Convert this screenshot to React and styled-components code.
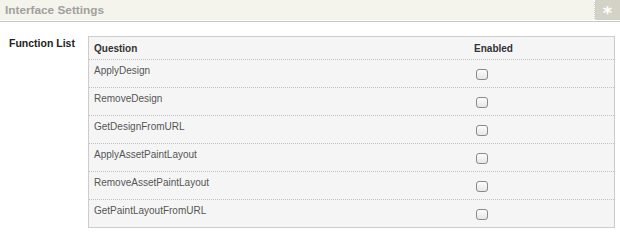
import React from 'react';
import styled, {createGlobalStyle} from "styled-components"

const Global = createGlobalStyle`
body {
  margin: 0;
  background: #fff;
  font-family: "Liberation Sans", Arial, sans-serif;
}
`;

const functions = [
  "ApplyDesign",
  "RemoveDesign",
  "GetDesignFromURL",
  "ApplyAssetPaintLayout",
  "RemoveAssetPaintLayout",
  "GetPaintLayoutFromURL",
];

const App = () => {
  return (
    <Page>
      <Global />
      <TitleBar>
        <Title>Interface Settings</Title>
        <StarBox>*</StarBox>
      </TitleBar>
      <Content>
        <Label>Function List</Label>
        <Table>
          <HeadRow>
            <QuestionCell header>Question</QuestionCell>
            <EnabledCell header>Enabled</EnabledCell>
          </HeadRow>
          {functions.map((name, i) => (
            <Row key={name} last={i === functions.length - 1}>
              <QuestionCell>{name}</QuestionCell>
              <EnabledCell>
                <Check type="checkbox" />
              </EnabledCell>
            </Row>
          ))}
        </Table>
      </Content>
    </Page>
  )
}

const Page = styled.div`
width: 620px;
`;

const TitleBar = styled.div`
display: flex;
align-items: stretch;
height: 20px;
background: #f4f3ec;
border-bottom: 1px solid #fff;
box-shadow: 0 1px 0 #c9c9c9;
`;

const Title = styled.div`
flex: 1;
padding-left: 5px;
font-size: 11.8px;
font-weight: bold;
line-height: 20px;
color: #a0a0a0;
`;

const StarBox = styled.div`
width: 26px;
box-sizing: border-box;
padding-top: 4px;
background: #d3d2c6;
border-left: 1px dotted #fff;
color: #fff;
font-family: "DejaVu Sans", sans-serif;
font-size: 18px;
font-weight: bold;
text-align: center;
line-height: 18px;
`;

const Content = styled.div`
display: flex;
align-items: flex-start;
padding-top: 15px;
`;

const Label = styled.div`
width: 88px;
padding-left: 9px;
box-sizing: border-box;
padding-top: 1px;
font-size: 10.5px;
font-weight: bold;
color: #222;
`;

const Table = styled.div`
width: 527px;
background: #f5f5f5;
border: 1px solid #cccccc;
box-sizing: border-box;
`;

const HeadRow = styled.div`
display: flex;
height: 22px;
align-items: center;
border-bottom: 1px dotted #c2c2c2;
`;

const Row = styled.div`
display: flex;
height: 27px;
border-bottom: ${({ last }) => (last ? "none" : "1px dotted #c2c2c2")};
`;

const QuestionCell = styled.div`
width: 279px;
padding-left: 5px;
padding-top: ${({ header }) => (header ? "0" : "5px")};
font-size: 10px;
font-weight: ${({ header }) => (header ? "bold" : "normal")};
color: ${({ header }) => (header ? "#333" : "#555")};
`;

const EnabledCell = styled.div`
flex: 1;
display: flex;
justify-content: center;
align-items: center;
font-size: 10px;
font-weight: ${({ header }) => (header ? "bold" : "normal")};
color: #333;
padding-right: ${({ header }) => (header ? "0" : "24px")};
`;

const Check = styled.input`
appearance: none;
-webkit-appearance: none;
margin: 0;
margin-top: 1px;
width: 12px;
height: 11px;
border: 1px solid #8a8a8a;
border-radius: 3px;
background: linear-gradient(#fdfdfd, #e6e6e6);
`;

export default App
